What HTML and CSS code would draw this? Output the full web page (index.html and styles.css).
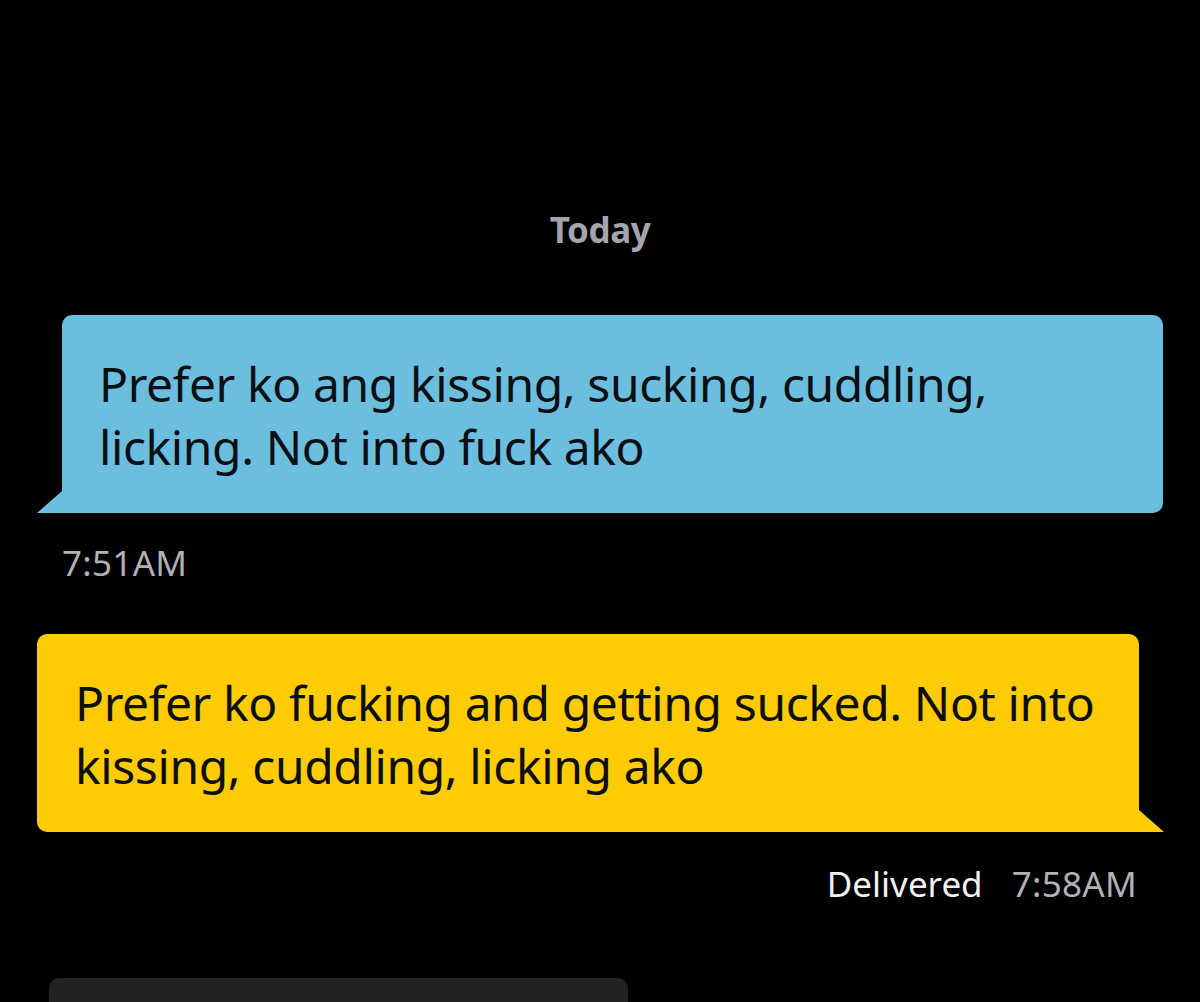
FILE: index.html
```html
<!DOCTYPE html>
<html>
<head>
<meta charset="utf-8">
<link rel="stylesheet" href="styles.css">
</head>
<body>
<div class="chat">
  <div class="day">Today</div>
  <div class="row in">
    <div class="bubble blue">Prefer ko ang kissing, sucking, cuddling, licking. Not into fuck ako</div>
  </div>
  <div class="meta left"><span class="time">7:51AM</span></div>
  <div class="row out">
    <div class="bubble yellow">Prefer ko fucking and getting sucked. Not into kissing, cuddling, licking ako</div>
  </div>
  <div class="meta right"><span class="status">Delivered</span><span class="time">7:58AM</span></div>
  <div class="composer"></div>
</div>
</body>
</html>
```
FILE: styles.css
```css
html, body {
  margin: 0;
  padding: 0;
  background: #000;
}
body {
  width: 1200px;
  height: 1002px;
  overflow: hidden;
  font-family: "Noto Sans", "Liberation Sans", sans-serif;
}
.chat {
  display: flex;
  flex-direction: column;
  padding-top: 207px;
}
.day {
  text-align: center;
  color: #a5a5ad;
  font-weight: 700;
  font-size: 35px;
  line-height: 46px;
  letter-spacing: -0.4px;
}
.row {
  display: flex;
  margin-top: 62px;
}
.row.in {
  padding-left: 62px;
  padding-right: 37px;
}
.row.out {
  padding-left: 37px;
  padding-right: 61px;
  margin-top: 49px;
}
.bubble {
  position: relative;
  flex: 1;
  height: 198px;
  box-sizing: border-box;
  border-radius: 10px;
  color: #0b0f14;
  font-size: 48px;
  line-height: 63px;
  letter-spacing: -0.4px;
}
.bubble.blue {
  background: #6cbede;
  border-bottom-left-radius: 0;
  padding: 37px 30px 0 37px;
}
.bubble.yellow {
  background: #ffcb05;
  border-bottom-right-radius: 0;
  padding: 37px 30px 0 38px;
}
.bubble.blue::after {
  content: "";
  position: absolute;
  left: -25px;
  bottom: 0;
  width: 25px;
  height: 22px;
  background: #6cbede;
  clip-path: polygon(0 100%, 100% 0, 100% 100%);
}
.bubble.yellow::after {
  content: "";
  position: absolute;
  right: -25px;
  bottom: 0;
  width: 25px;
  height: 22px;
  background: #ffcb05;
  clip-path: polygon(0 0, 100% 100%, 0 100%);
}
.meta {
  display: flex;
  font-size: 35px;
  line-height: 44px;
  margin-top: 28px;
}
.meta.left {
  padding-left: 62px;
}
.meta.right {
  justify-content: flex-end;
  padding-right: 63px;
  gap: 29px;
  margin-top: 30px;
}
.time {
  color: #b1b1b6;
  letter-spacing: 0.3px;
}
.status {
  color: #f2f2f2;
}
.composer {
  margin-top: 72px;
  margin-left: 49px;
  width: 579px;
  height: 60px;
  background: #222;
  border-radius: 10px;
}
```
